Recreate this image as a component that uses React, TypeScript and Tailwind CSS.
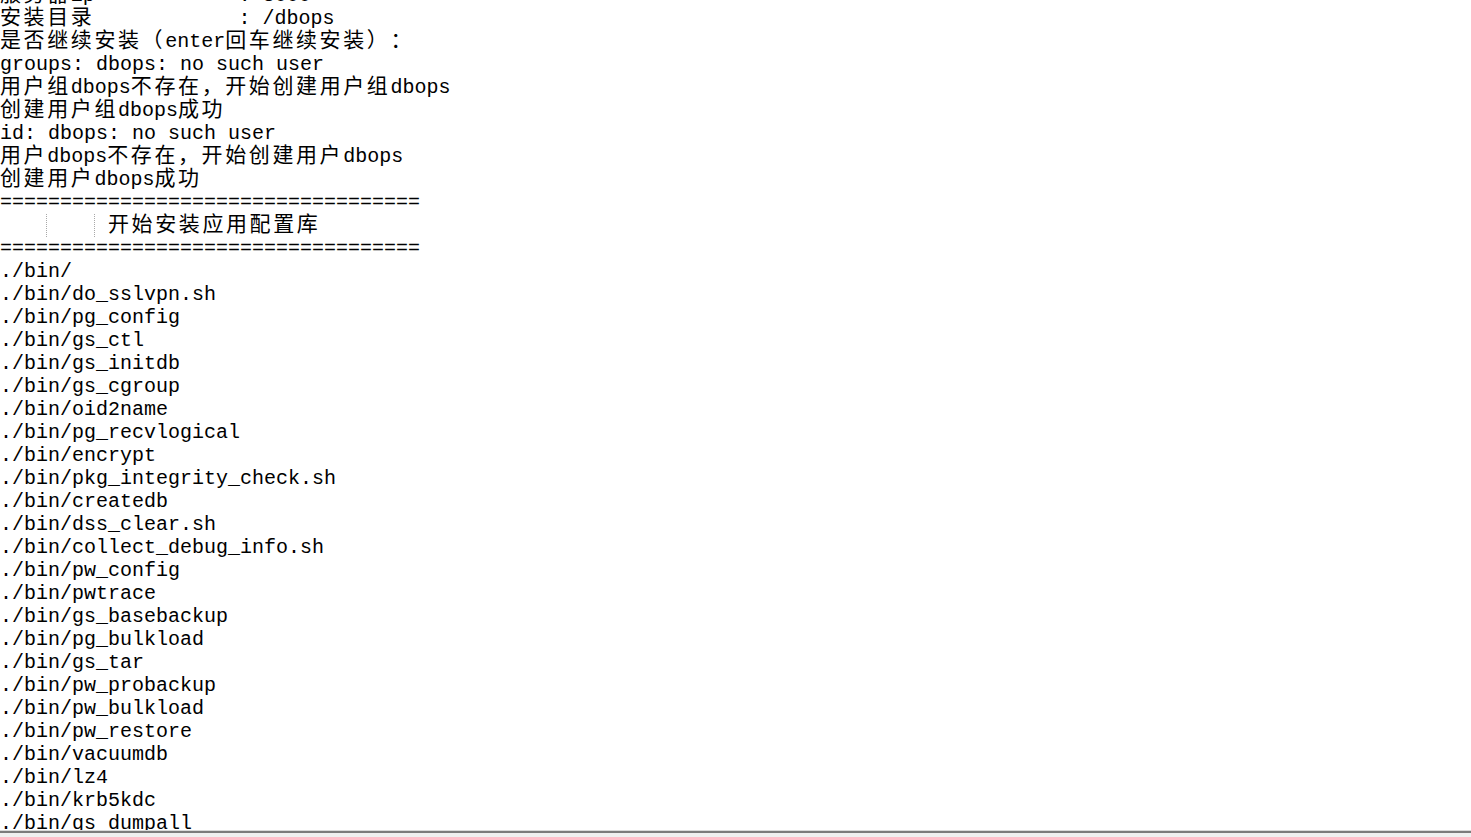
import React from 'react';

const CJK_RE = /([\u3000-\u303f\u4e00-\u9fff\uff00-\uffef]+)/;

const BIN_FILES = [
  '',
  'do_sslvpn.sh',
  'pg_config',
  'gs_ctl',
  'gs_initdb',
  'gs_cgroup',
  'oid2name',
  'pg_recvlogical',
  'encrypt',
  'pkg_integrity_check.sh',
  'createdb',
  'dss_clear.sh',
  'collect_debug_info.sh',
  'pw_config',
  'pwtrace',
  'gs_basebackup',
  'pg_bulkload',
  'gs_tar',
  'pw_probackup',
  'pw_bulkload',
  'pw_restore',
  'vacuumdb',
  'lz4',
  'krb5kdc',
  'gs_dumpall',
];

const SEPARATOR = '='.repeat(35);

// mixed latin / chinese text: latin in a Courier-width mono, chinese runs wider
const Mixed: React.FC<{ text: string }> = ({ text }) => {
  const parts = text.split(CJK_RE);
  return (
    <>
      {parts.map((part, i) =>
        i % 2 === 1 ? (
          <span
            key={i}
            className="font-['Noto_Sans_CJK_SC',sans-serif] text-[21px] leading-[0] tracking-[2.6px] [text-spacing-trim:space-all]"
          >
            {part}
          </span>
        ) : (
          <span key={i}>{part}</span>
        )
      )}
    </>
  );
};

const Line: React.FC<{ children: React.ReactNode }> = ({ children }) => (
  <div className="h-[23px] leading-[23px] whitespace-pre">{children}</div>
);

const TabGuide: React.FC = () => (
  <span className="inline-block w-[47px] h-[23px] mr-px align-top border-r border-dotted border-[#a8a8a8]" />
);

const App: React.FC = () => {
  const header = [
    '服务器ip            : 8000',
    '安装目录            : /dbops',
    '是否继续安装（enter回车继续安装）：',
    'groups: dbops: no such user',
    '用户组dbops不存在，开始创建用户组dbops',
    '创建用户组dbops成功',
    'id: dbops: no such user',
    '用户dbops不存在，开始创建用户dbops',
    '创建用户dbops成功',
  ];

  return (
    <div className="w-[1471px] h-[837px] flex flex-col bg-white overflow-hidden">
      {/* Editor text area */}
      <div className="flex-1 overflow-hidden">
        <div className="mt-[-16px] font-['Liberation_Mono','Noto_Sans_CJK_SC',monospace] text-[20px] text-black">
          {header.map((t, i) => (
            <Line key={i}>
              <Mixed text={t} />
            </Line>
          ))}
          <Line>{SEPARATOR}</Line>
          <Line>
            <TabGuide />
            <TabGuide />
            <Mixed text=" 开始安装应用配置库" />
          </Line>
          <Line>{SEPARATOR}</Line>
          {BIN_FILES.map((f, i) => (
            <Line key={i}>{`./bin/${f}`}</Line>
          ))}
        </div>
      </div>

      {/* Bottom edge / status bar */}
      <div className="h-px bg-[#dadada]" />
      <div className="h-[2px] bg-[#7c7c7c]" />
      <div className="h-[4px] bg-[#f0f0f0]" />
    </div>
  );
};

export default App;
